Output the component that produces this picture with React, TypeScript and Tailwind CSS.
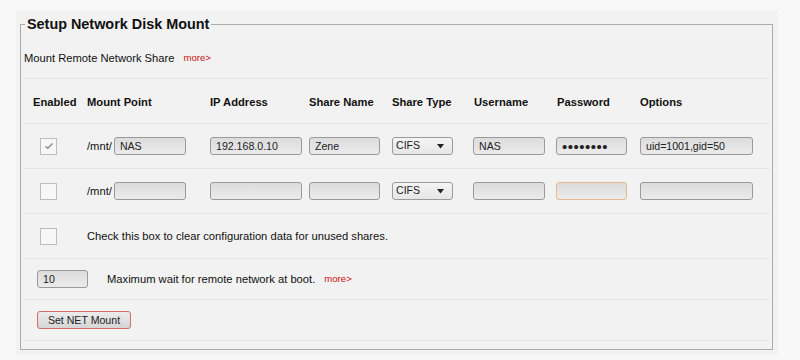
import { useState } from 'react';

const inputCls =
  'h-[18px] rounded-[3px] border border-[#9a9a9a] bg-gradient-to-b from-[#dcdcdc] to-[#ebebeb] px-[5px] text-[10.6px] leading-[16px] text-[#222] outline-none';

function Check({ checked = false }: { checked?: boolean }) {
  return (
    <div className="flex h-[17px] w-[17px] items-center justify-center border border-[#bdbdbd] bg-[#f7f7f7]">
      {checked && (
        <svg width="10" height="8" viewBox="0 0 10 8">
          <path d="M1.5 4.2 L3.8 6.3 L8.5 1.5" fill="none" stroke="#8a8a8a" strokeWidth="1.3" />
        </svg>
      )}
    </div>
  );
}

function TypeSelect() {
  return (
    <div className="flex h-[18px] w-[61px] items-center justify-between rounded-[3px] border border-[#9a9a9a] bg-gradient-to-b from-[#f4f4f4] to-[#e6e6e6] pl-[3px] pr-[8px] text-[10.6px] text-[#222]">
      <span>CIFS</span>
      <svg width="7" height="5" viewBox="0 0 7 5">
        <path d="M0 0 H7 L3.5 4.5 Z" fill="#222" />
      </svg>
    </div>
  );
}

const headers = ['Enabled', 'Mount Point', 'IP Address', 'Share Name', 'Share Type', 'Username', 'Password', 'Options'];
const grid = 'grid grid-cols-[54px_123px_99px_83px_82px_83px_83px_1fr] items-center';

interface Share {
  enabled: boolean;
  mount: string;
  ip: string;
  name: string;
  user: string;
  pass: string;
  options: string;
}

export default function App() {
  const [shares] = useState<Share[]>([
    { enabled: true, mount: 'NAS', ip: '192.168.0.10', name: 'Zene', user: 'NAS', pass: '••••••••', options: 'uid=1001,gid=50' },
    { enabled: false, mount: '', ip: '', name: '', user: '', pass: '', options: '' },
  ]);

  return (
    <div className="min-h-[360px] bg-[#f8f8f8] pt-[10px] font-['Liberation_Sans',Arial,sans-serif] text-[11.2px] text-[#111]">
      <div className="ml-[16px] w-[762px] bg-[#f2f2f2] pt-[5px] pb-[5px] pl-[4px] pr-[5px]">
        <fieldset className="border border-[#ababab]">
          <legend className="ml-[4px] px-[2px] text-[14.4px] font-bold leading-[18px] text-[#111]">
            Setup Network Disk Mount
          </legend>

          <div className="mx-[2px] flex h-[46px] items-center border-b border-[#e4e4e4] pt-[5px] pl-[1px]">
            <span>Mount Remote Network Share</span>
            <a className="ml-[9px] text-[9.6px] text-[#cc1111]">more&gt;</a>
          </div>

          <div className={`${grid} mx-[2px] h-[45px] border-b border-[#e4e4e4] pt-[3px] pl-[10px] font-bold`}>
            {headers.map((h) => (
              <span key={h}>{h}</span>
            ))}
          </div>

          {shares.map((s, i) => (
            <div key={i} className={`${grid} mx-[2px] h-[45px] border-b border-[#e4e4e4] pl-[17px]`}>
              <div className="flex">
                <Check checked={s.enabled} />
              </div>
              <div className="-ml-[7px] flex items-center">
                <span className="mr-[2px]">/mnt/</span>
                <input className={`${inputCls} w-[72px]`} defaultValue={s.mount} />
              </div>
              <input className={`${inputCls} -ml-[7px] w-[92px]`} defaultValue={s.ip} />
              <input className={`${inputCls} -ml-[7px] w-[71px]`} defaultValue={s.name} />
              <div className="-ml-[7px]">
                <TypeSelect />
              </div>
              <input className={`${inputCls} -ml-[8px] w-[72px]`} defaultValue={s.user} />
              <input
                className={`${inputCls} -ml-[8px] w-[71px] !text-[15px] tracking-[0.5px] ${i === 1 ? '!border-[#e8b888]' : ''}`}
                defaultValue={s.pass}
              />
              <input className={`${inputCls} -ml-[7px] w-[113px]`} defaultValue={s.options} />
            </div>
          ))}

          <div className="mx-[2px] flex h-[45px] items-center border-b border-[#e4e4e4] pl-[17px]">
            <Check />
            <span className="ml-[30px]">Check this box to clear configuration data for unused shares.</span>
          </div>

          <div className="mx-[2px] flex h-[41px] items-center border-b border-[#e4e4e4] pl-[14px]">
            <input className={`${inputCls} w-[51px]`} defaultValue="10" />
            <span className="ml-[19px]">Maximum wait for remote network at boot.</span>
            <a className="ml-[9px] text-[9.6px] text-[#cc1111]">more&gt;</a>
          </div>

          <div className="mx-[2px] mb-[8px] flex h-[41px] items-center border-b border-[#e4e4e4] pl-[14px]">
            <button className="h-[18px] w-[94px] rounded-[3px] border border-[#d46a6a] bg-gradient-to-b from-[#ececec] to-[#d6d6d6] text-[10.6px] leading-[16px] text-[#222]">
              Set NET Mount
            </button>
          </div>
        </fieldset>
      </div>
    </div>
  );
}
